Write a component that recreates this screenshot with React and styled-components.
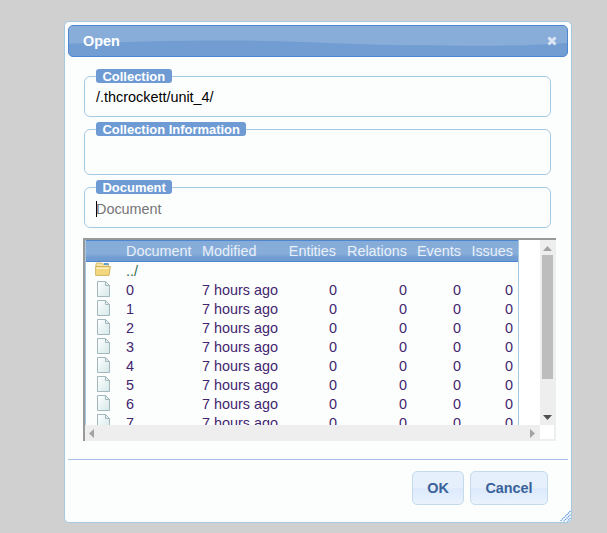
import React from 'react'
import styled, { createGlobalStyle } from 'styled-components'

const GlobalStyle = createGlobalStyle`
  html, body {
    margin: 0;
    padding: 0;
    height: 100%;
    overflow: hidden;
    background: #d0d0d0;
    font-family: "Liberation Sans", Arial, sans-serif;
  }
`

const Page = styled.div`
  height: 533px;
  padding: 21px 0 0 64px;
  box-sizing: border-box;
`

const Dialog = styled.div`
  width: 508px;
  height: 502px;
  box-sizing: border-box;
  padding: 3px;
  background: #fcfefe;
  border: 1px solid #a6c9e2;
  border-radius: 5px;
  display: flex;
  flex-direction: column;
  position: relative;
`

const TitleBar = styled.div`
  height: 32px;
  box-sizing: border-box;
  flex: none;
  display: flex;
  align-items: center;
  justify-content: space-between;
  padding: 0 9px 0 14px;
  border: 1px solid #4f86d2;
  border-radius: 5px;
  background: #719dd2;
  color: #fff;
  font-weight: bold;
  font-size: 14.4px;
  position: relative;
  overflow: hidden;
`

const Wave = styled.svg`
  position: absolute;
  left: 0;
  top: 0;
  width: 100%;
  height: 100%;
`

const TitleText = styled.span`
  position: relative;
`

const CloseMark = styled.svg`
  width: 12px;
  height: 12px;
  display: block;
  position: relative;
`

const Body = styled.div`
  flex: none;
  padding: 12px 17px 0 16px;
  display: flex;
  flex-direction: column;
`

const Field = styled.fieldset`
  margin: 0 0 5px;
  padding: 0 11px;
  height: ${p => p.$h}px;
  box-sizing: border-box;
  border: 1px solid #a6c9e2;
  border-radius: 6px;
  min-width: 0;
`

const FieldLabel = styled.legend`
  background: #6e9bd3;
  color: #fff;
  font-weight: bold;
  font-size: 12.96px;
  line-height: 15px;
  height: 14px;
  padding: 0 6.5px;
  border-radius: 3px;
`

const FieldValue = styled.div`
  font-size: 14.4px;
  line-height: 16px;
  color: #000;
  padding-top: 6px;
`

const Placeholder = styled(FieldValue)`
  color: #757575;
  display: flex;
  align-items: flex-start;
  padding-top: 7px;
`

const Caret = styled.span`
  width: 1px;
  height: 16px;
  margin-right: -1px;
  background: #000;
  flex: none;
`

const Browser = styled.div`
  width: 473px;
  height: 203px;
  margin: 5px 0 0 -1px;
  flex: none;
  box-sizing: border-box;
  border-top: 2px solid #999;
  border-left: 2px solid #999;
  display: grid;
  grid-template-columns: 455px 16px;
  grid-template-rows: 185px 16px;
  background: #fff;
`

const Viewport = styled.div`
  overflow: hidden;
  background: #fff;
`

const Listing = styled.div`
  width: 434px;
  height: 185px;
  box-sizing: border-box;
  border-left: 1px solid #a6c9e2;
  border-right: 1px solid #a6c9e2;
  overflow: hidden;
  background: #fcfefe;
`

const columns = '40px 76px 76px 63px 71px 54px 52px'

const HeaderRow = styled.div`
  display: grid;
  grid-template-columns: ${columns};
  height: 22px;
  box-sizing: border-box;
  margin: 0 -1px;
  align-items: center;
  border: 1px solid #4f86d2;
  background: linear-gradient(to bottom, #85abd8 0, #88add9 62%, #719dd2 82%, #6f9bd1 100%);
  color: #e8f0fa;
  font-size: 14.4px;
`

const Row = styled.div`
  display: grid;
  grid-template-columns: ${columns};
  height: 19px;
  align-items: start;
  line-height: 18px;
  font-size: 14.4px;
  color: ${p => (p.$up ? '#2f6b4a' : '#43246f')};
`

const IconCell = styled.div`
  display: flex;
  justify-content: center;
  align-items: flex-start;
  padding-right: 6px;
  height: 19px;
`

const Num = styled.div`
  text-align: right;
  padding-right: ${p => p.$pad ?? 5}px;
`

const HeadNum = styled.div`
  text-align: right;
  padding-right: 5px;
  white-space: nowrap;
`

const VTrack = styled.div`
  background: #eee;
  display: flex;
  flex-direction: column;
  align-items: center;
  padding-right: 1px;
`

const VThumb = styled.div`
  width: 11px;
  height: 124px;
  margin-top: -1px;
  background: #bdbdbd;
  flex: none;
`

const VSpacer = styled.div`
  flex: 1;
`

const HTrack = styled.div`
  background: #eee;
  display: flex;
  align-items: center;
  justify-content: space-between;
  padding: 0 5px 0 4px;
`

const ArrowWrap = styled.div`
  height: 16px;
  display: flex;
  align-items: center;
  justify-content: center;
  flex: none;
`

const Corner = styled.div`
  background: #fff;
  border-right: 2px solid #eee;
  border-bottom: 2px solid #eee;
`

const Divider = styled.div`
  height: 1px;
  flex: none;
  background: #a6bfe2;
  margin-top: 18px;
`

const Footer = styled.div`
  flex: 1;
  display: flex;
  justify-content: flex-end;
  align-items: flex-start;
  gap: 6px;
  padding: 11px 20px 0 0;
`

const Button = styled.button`
  height: 34px;
  width: ${p => p.$w}px;
  padding: 0;
  box-sizing: border-box;
  border: 1px solid #c5dbec;
  border-radius: 5px;
  background: linear-gradient(to bottom, #e6effc 0, #e6effc 50%, #dceafc 52%, #eaf2fd 100%);
  color: #3a6199;
  font-family: inherit;
  font-weight: bold;
  font-size: 14.4px;
`

const Grip = styled.svg`
  position: absolute;
  right: 0;
  bottom: 0;
  width: 12px;
  height: 12px;
`

const FileIcon = () => (
  <svg width="13" height="16" viewBox="0 0 13 16">
    <defs>
      <linearGradient id="sheet" x1="0" y1="0" x2="1" y2="1">
        <stop offset="0" stopColor="#ffffff" />
        <stop offset="1" stopColor="#d5e8e8" />
      </linearGradient>
    </defs>
    <path d="M.5 .5H8.5L12.5 4.5V15.5H.5Z" fill="url(#sheet)" stroke="#a3b8bd" />
    <path d="M8.5 .5V4.5H12.5Z" fill="#e6f0f2" stroke="#a3b8bd" />
  </svg>
)

const FolderIcon = () => (
  <svg width="16" height="14" viewBox="0 0 16 14">
    <path d="M1 3V2Q1 1 2 1H6L7 2H13.5V5H1Z" fill="#f5e4a8" stroke="#c8a850" strokeWidth=".8" />
    <rect x="9" y="1" width="4.5" height="2" fill="#5b9bd8" />
    <path d="M.6 13.4V4.6H15.4L14 13.4Z" fill="#f3d77e" stroke="#c8a850" strokeWidth=".8" />
    <path d="M1.4 5.4H14.4L14 7H1.4Z" fill="#fcf0c0" />
  </svg>
)

const BandWave = () => (
  <Wave viewBox="0 0 500 32" preserveAspectRatio="none">
    <path d="M0 0H500V18C470 20 450 21 430 21C380 21 340 21 296 19.5C250 17.5 200 15.5 160 15.5C100 15.5 50 17 0 19Z" fill="#88add9" />
  </Wave>
)

const files = [0, 1, 2, 3, 4, 5, 6, 7]

export default function App() {
  return (
    <Page>
      <GlobalStyle />
      <Dialog>
        <TitleBar>
          <BandWave />
          <TitleText>Open</TitleText>
          <CloseMark viewBox="0 0 12 12">
            <path d="M2.5 2.5L9.5 9.5M9.5 2.5L2.5 9.5" stroke="#dbe5f4" strokeWidth="3" />
          </CloseMark>
        </TitleBar>
        <Body>
          <Field $h={48}>
            <FieldLabel>Collection</FieldLabel>
            <FieldValue>/.thcrockett/unit_4/</FieldValue>
          </Field>
          <Field $h={53}>
            <FieldLabel>Collection Information</FieldLabel>
          </Field>
          <Field $h={48}>
            <FieldLabel>Document</FieldLabel>
            <Placeholder><Caret />Document</Placeholder>
          </Field>
          <Browser>
            <Viewport>
              <Listing>
                <HeaderRow>
                  <div />
                  <div>Document</div>
                  <div>Modified</div>
                  <HeadNum>Entities</HeadNum>
                  <HeadNum>Relations</HeadNum>
                  <HeadNum>Events</HeadNum>
                  <HeadNum>Issues</HeadNum>
                </HeaderRow>
                <Row $up>
                  <IconCell><FolderIcon /></IconCell>
                  <div>../</div>
                </Row>
                {files.map(n => (
                  <Row key={n}>
                    <IconCell><FileIcon /></IconCell>
                    <div>{n}</div>
                    <div>7 hours ago</div>
                    <Num $pad={4}>0</Num>
                    <Num>0</Num>
                    <Num>0</Num>
                    <Num>0</Num>
                  </Row>
                ))}
              </Listing>
            </Viewport>
            <VTrack>
              <ArrowWrap>
                <svg width="9" height="5" viewBox="0 0 9 5"><path d="M4.5 0L9 5H0Z" fill="#a3a3a3" /></svg>
              </ArrowWrap>
              <VThumb />
              <VSpacer />
              <ArrowWrap>
                <svg width="9" height="5" viewBox="0 0 9 5"><path d="M0 0H9L4.5 5Z" fill="#505050" /></svg>
              </ArrowWrap>
            </VTrack>
            <HTrack>
              <svg width="5" height="9" viewBox="0 0 5 9"><path d="M5 0V9L0 4.5Z" fill="#a3a3a3" /></svg>
              <svg width="5" height="9" viewBox="0 0 5 9"><path d="M0 0V9L5 4.5Z" fill="#a3a3a3" /></svg>
            </HTrack>
            <Corner />
          </Browser>
        </Body>
        <Divider />
        <Footer>
          <Button $w={52}>OK</Button>
          <Button $w={78}>Cancel</Button>
        </Footer>
        <Grip viewBox="0 0 12 12">
          <path d="M11.5 1L1 11.5M11.5 4.5L4.5 11.5M11.5 8L8 11.5" stroke="#5f9be0" strokeWidth="1.2" strokeDasharray="1.4 .7" />
        </Grip>
      </Dialog>
    </Page>
  )
}
